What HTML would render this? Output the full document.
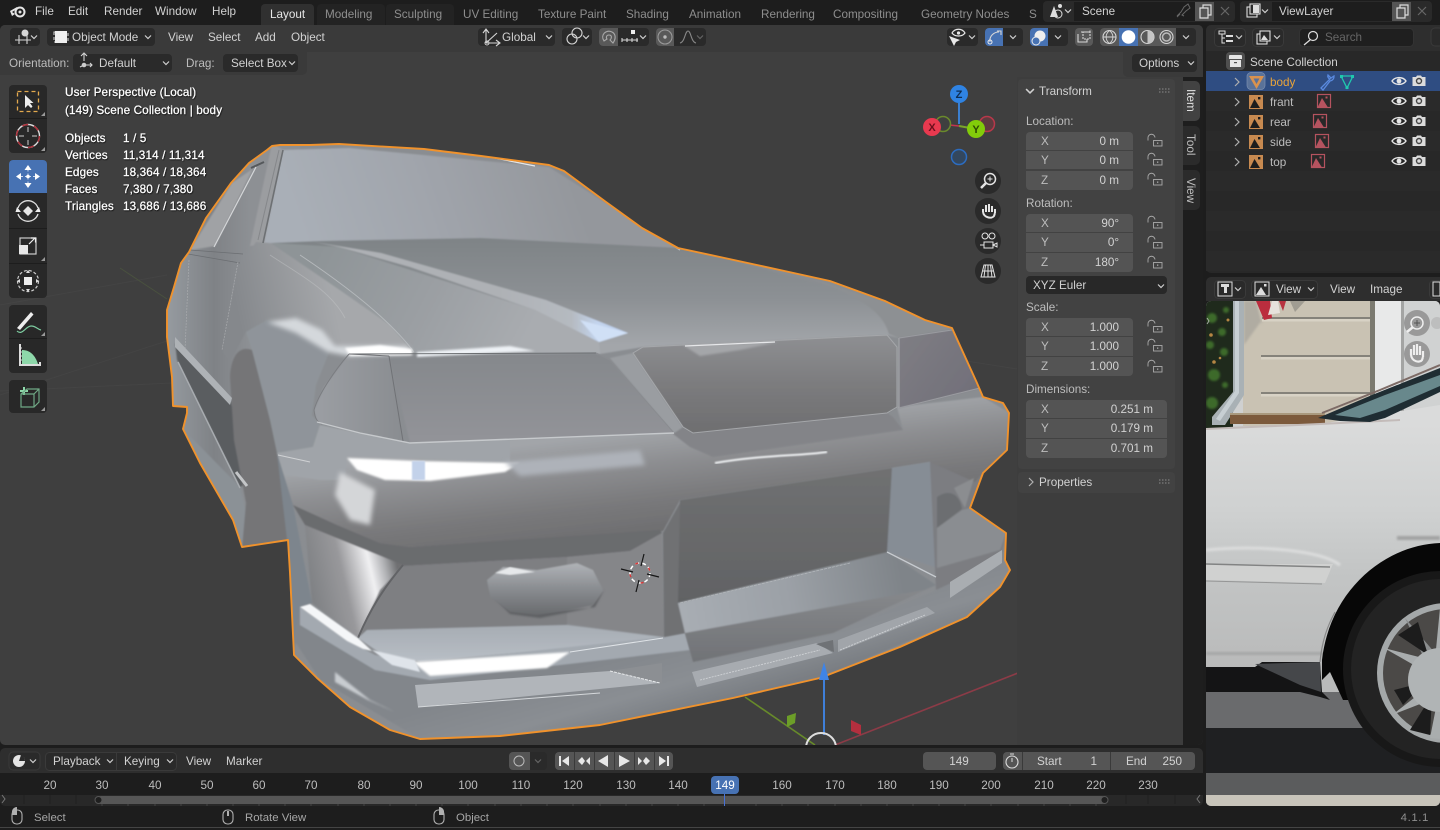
<!DOCTYPE html>
<html><head><meta charset="utf-8"><title>Blender</title>
<style>
html,body{margin:0;padding:0;background:#1d1d1d;width:1440px;height:830px;overflow:hidden}
svg{display:block;position:absolute;left:0;top:0}
text{font-family:"Liberation Sans",sans-serif;font-size:11.7px;fill:#d2d2d2}
.d{fill:#8e8e8e}.w{fill:#fff;font-size:11.7px;letter-spacing:.14px;stroke:#fff;stroke-width:.18px;filter:url(#ts)}
.s{fill:#a6a6a6;font-size:11.4px}.l{fill:#bdbdbd}.r{text-anchor:end}.m{text-anchor:middle}
</style></head><body>
<svg width="1440" height="830" viewBox="0 0 1440 830" xmlns="http://www.w3.org/2000/svg">
<defs>
<filter id="ts" x="-5%" y="-30%" width="110%" height="160%"><feDropShadow dx="0.6" dy="0.8" stdDeviation="0.5" flood-color="#000" flood-opacity=".9"/></filter>
<filter id="b06" x="-5%" y="-5%" width="110%" height="110%"><feGaussianBlur stdDeviation=".7"/></filter>
<filter id="b1" x="-20%" y="-40%" width="140%" height="180%"><feGaussianBlur stdDeviation="1"/></filter>
<filter id="b2" x="-30%" y="-60%" width="160%" height="220%"><feGaussianBlur stdDeviation="2.5"/></filter>
<filter id="b5" x="-40%" y="-40%" width="180%" height="180%"><feGaussianBlur stdDeviation="6"/></filter>
<clipPath id="car"><path id="carp" d="M272 146 280 145 310 145 339 144 424 149 481 156 549 165 564 171 606 202 642 228 678 248 720 257 780 270 830 281 885 301 925 320 952 328 977 383 983 397 1003 403 1009 413 1007 450 983 473 970 508 1006 533 1005 560 1010 570 1000 587 967 617 900 647 820 678 733 698 600 725 500 736 420 739 390 730 350 707 317 678 294 655 290 573 288 540 242 547 233 520 200 463 183 429 187 413 187 407 173 406 172 377 167 337 167 310 174 287 181 263 189 252 206 218 231 183 249 163 267 150Z"/></clipPath>
<clipPath id="img"><rect x="1206" y="301" width="234" height="505" rx="5"/></clipPath>
<clipPath id="vp"><rect x="0" y="25" width="1203" height="720" rx="5"/></clipPath>
<g id="chev"><path d="M-3-1.5 0 1.5 3-1.5" fill="none" stroke="#d0d0d0" stroke-width="1.2"/></g>
<g id="chr"><path d="M-2-4 2 0-2 4" fill="none" stroke="#b0b0b0" stroke-width="1.2"/></g>
<g id="eye"><path d="M-7 0C-4-4.500 4-4.500 7 0 4 4.500-4 4.500-7 0Z" fill="none" stroke="#e6e6e6" stroke-width="1.400"/><circle r="2.400" fill="#e6e6e6"/></g>
<g id="cam"><path d="M-6.500-4H-3L-2-5.500H2L3-4H6.500V5H-6.500Z" fill="#dcdcdc"/><circle r="3.200" fill="#444"/><circle r="1.800" fill="#dcdcdc"/></g>
<g id="lock"><path d="M-7-.5V-3A3.500 3.500 0 0 1 0-3.500" fill="none" stroke="#aaa" stroke-width=".9"/><rect x="-1.500" y="-.5" width="8.500" height="5.500" fill="none" stroke="#aaa" stroke-width=".9"/><rect x="2" y="1.500" width="1.300" height="1.300" fill="#aaa"/></g>
<g id="im"><rect x="-7" y="-7" width="14" height="14" fill="#c88a50"/><path d="M-6 6-1.500-3 4 6Z" fill="#1d1d1d"/><rect x="2" y="-5" width="2.400" height="2.400" fill="#1d1d1d"/></g>
<g id="imr"><rect x="-6.500" y="-6.500" width="13" height="13" fill="none" stroke="#b5535f" stroke-width="1.200"/><path d="M-6.500 6.500-2-3 4 6.500Z" fill="#b5535f"/><rect x="1.500" y="-4.500" width="2" height="2" fill="#b5535f"/></g>
<g id="mouse"><rect x="-5" y="-7" width="10" height="14" rx="4.500" fill="none" stroke="#b0b0b0" stroke-width="1.100"/></g>
<linearGradient id="gWind" gradientUnits="userSpaceOnUse" x1="300" y1="240" x2="560" y2="150"><stop offset="0" stop-color="#a9afb7"/><stop offset=".5" stop-color="#a0a4ab"/><stop offset="1" stop-color="#94979c"/></linearGradient>
<linearGradient id="gHood" gradientUnits="userSpaceOnUse" x1="0" y1="242" x2="0" y2="345"><stop offset="0" stop-color="#7f8487"/><stop offset=".55" stop-color="#8c9094"/><stop offset="1" stop-color="#a3a6aa"/></linearGradient>
<linearGradient id="gUnder" gradientUnits="userSpaceOnUse" x1="320" y1="250" x2="520" y2="354"><stop offset="0" stop-color="#8e9497"/><stop offset=".5" stop-color="#9a9ea2"/><stop offset="1" stop-color="#a9acb0"/></linearGradient>
<linearGradient id="gGrille" gradientUnits="userSpaceOnUse" x1="0" y1="355" x2="0" y2="440"><stop offset="0" stop-color="#85888c"/><stop offset="1" stop-color="#929398"/></linearGradient>
<linearGradient id="gLamp" gradientUnits="userSpaceOnUse" x1="320" y1="0" x2="400" y2="0"><stop offset="0" stop-color="#9a9da2"/><stop offset="1" stop-color="#8a8d91"/></linearGradient>
<linearGradient id="gGrilleR" gradientUnits="userSpaceOnUse" x1="0" y1="340" x2="0" y2="432"><stop offset="0" stop-color="#8c8d90"/><stop offset=".5" stop-color="#7b7b7d"/><stop offset="1" stop-color="#6e6e70"/></linearGradient>
<linearGradient id="gLampR" gradientUnits="userSpaceOnUse" x1="900" y1="340" x2="980" y2="400"><stop offset="0" stop-color="#7e7d83"/><stop offset="1" stop-color="#706e78"/></linearGradient>
<linearGradient id="gBumpU" gradientUnits="userSpaceOnUse" x1="600" y1="436" x2="612" y2="542"><stop offset="0" stop-color="#a2a5a9"/><stop offset=".3" stop-color="#8d8e91"/><stop offset=".65" stop-color="#79797b"/><stop offset="1" stop-color="#6c6c6e"/></linearGradient>
<linearGradient id="gPlate" gradientUnits="userSpaceOnUse" x1="0" y1="470" x2="0" y2="610"><stop offset="0" stop-color="#6f7071"/><stop offset="1" stop-color="#606163"/></linearGradient>
<linearGradient id="gVent" gradientUnits="userSpaceOnUse" x1="312" y1="590" x2="398" y2="570"><stop offset="0" stop-color="#808285"/><stop offset=".38" stop-color="#98989b"/><stop offset=".7" stop-color="#f0f0f2"/><stop offset=".86" stop-color="#b0b1b4"/><stop offset="1" stop-color="#6f7072"/></linearGradient>
<linearGradient id="gLipT" gradientUnits="userSpaceOnUse" x1="680" y1="610" x2="900" y2="570"><stop offset="0" stop-color="#a8adb3"/><stop offset=".5" stop-color="#9ba0a6"/><stop offset="1" stop-color="#7f8489"/></linearGradient>
<linearGradient id="gLipF" gradientUnits="userSpaceOnUse" x1="0" y1="590" x2="0" y2="665"><stop offset="0" stop-color="#86888b"/><stop offset="1" stop-color="#6f7175"/></linearGradient>
<linearGradient id="gSide" gradientUnits="userSpaceOnUse" x1="170" y1="0" x2="250" y2="0"><stop offset="0" stop-color="#94999e"/><stop offset=".55" stop-color="#7f8286"/><stop offset="1" stop-color="#8d9094"/></linearGradient>
<linearGradient id="gFender" gradientUnits="userSpaceOnUse" x1="235" y1="300" x2="330" y2="280"><stop offset="0" stop-color="#85888c"/><stop offset="1" stop-color="#a6a8ab"/></linearGradient>
<linearGradient id="gStripe" gradientUnits="userSpaceOnUse" x1="500" y1="0" x2="630" y2="0"><stop offset="0" stop-color="#aeb1b5"/><stop offset=".55" stop-color="#b5bac0"/><stop offset=".75" stop-color="#c3d4ee"/><stop offset="1" stop-color="#bcd0ee"/></linearGradient>
<linearGradient id="gShelf" gradientUnits="userSpaceOnUse" x1="0" y1="625" x2="0" y2="665"><stop offset="0" stop-color="#a6acb3"/><stop offset="1" stop-color="#bac0c7"/></linearGradient>
<linearGradient id="gFog" gradientUnits="userSpaceOnUse" x1="0" y1="565" x2="0" y2="615"><stop offset="0" stop-color="#adb0b4"/><stop offset=".45" stop-color="#8b8e92"/><stop offset="1" stop-color="#686a6d"/></linearGradient>
<linearGradient id="gLower" gradientUnits="userSpaceOnUse" x1="600" y1="660" x2="620" y2="730"><stop offset="0" stop-color="#82868b"/><stop offset=".6" stop-color="#8a8e93"/><stop offset="1" stop-color="#7a7e83"/></linearGradient>
<linearGradient id="gBody" gradientUnits="userSpaceOnUse" x1="0" y1="424" x2="0" y2="670"><stop offset="0" stop-color="#dadbdb"/><stop offset=".35" stop-color="#cfd1d1"/><stop offset=".6" stop-color="#c3c5c5"/><stop offset="1" stop-color="#b9baba"/></linearGradient>
</defs>

<rect width="1440" height="830" fill="#1d1d1d"/>

<!-- VIEWPORT -->
<g clip-path="url(#vp)">
<rect x="0" y="25" width="1203" height="720" fill="#3f3f3f"/>
<g stroke="#484848" stroke-width="1" fill="none" opacity=".6">
<path d="M0 305 167 275M0 395 170 340M0 391 172 383M960 360 1183 395"/>
</g>
<path d="M120 268 167 299" stroke="#49513f" fill="none"/>
<path d="M835 745 1183 608" stroke="#8c3b47" stroke-width="1.600" fill="none"/>
<path d="M745 697 815 745" stroke="#678a2a" stroke-width="1.600" fill="none"/>

<!-- CAR -->
<use href="#carp" fill="#8a8d91"/>
<g clip-path="url(#car)">
<g filter="url(#b06)">
<path d="M160 140H300V300L290 560 240 560 160 430Z" fill="url(#gSide)"/>
<path d="M272 144 284 150 264 244 250 246Z" fill="#9b9da0"/>
<path d="M283 150 349 148 549 167 680 250 480 240 264 244Z" fill="url(#gWind)"/>
<path d="M263 162 254 166 215 246 190 250 232 183Z" fill="#a0a2a5"/>
<path d="M175 343 231 402 248 483 240 487 177 360Z" fill="#5a5d60"/>
<path d="M183 429 240 487 248 520 242 547 200 463Z" fill="#8b9196"/>
<path d="M230 377C231 358 238 345 252 350L273 420 290 540 242 549 246 503 234 440Z" fill="#757577"/>
<path d="M256 242 271 243 340 290 390 325 415 354 349 354 324 346 296 327 267 320 246 332 230 362 223 352 237 270Z" fill="url(#gFender)"/>
<path d="M252 350 246 332 267 320 296 327 330 350 316 385 312 415 320 425 313 447 277 453 270 420Z" fill="#8f949a"/>
<path d="M271 243 320 241 481 238 680 248 720 257 885 302 952 328 899 338 887 335 643 347 600 354 415 354 390 325 340 290Z" fill="url(#gHood)"/>
<path d="M271 243 339 247 535 310 599 342 600 354 415 354 390 325 340 290Z" fill="url(#gUnder)"/>
<path d="M314 242 381 253 546 300 628 333 599 342 535 310 410 267 339 247Z" fill="url(#gStripe)"/>
<path d="M580 320 628 333 599 342Z" fill="#d0e0f6"/>
<path d="M760 262 885 302 952 328 899 338 889 334C880 300 830 285 760 262Z" fill="#8d9093"/>
<path d="M277 453 313 447 320 425 410 443 674 433 690 447 713 457 903 430 897 407 983 397 1008 412 1007 450 983 473 975 490 937 500 930 462 892 468 680 500 663 531 410 547 380 543 337 525 293 505Z" fill="url(#gBumpU)"/>
<path d="M277 453 313 447 320 425 410 443 510 440 510 464 420 458 347 456 345 480 320 480 285 475Z" fill="#a0a4a9"/>
<path d="M349 354 389 356 403 441 360 433 317 422 314 410 324 387Z" fill="url(#gLamp)"/>
<path d="M389 356 596 353 610 360 674 433 410 443Z" fill="url(#gGrille)"/>
<path d="M610 358 633 353 683 427 693 433 674 433Z" fill="#9a9da1"/>
<path d="M673 434 683 427 693 433 887 413 893 417 903 430 713 457 690 447Z" fill="#838488"/>
<path d="M633 353 643 347 887 335 897 347 897 407 887 413 693 433 683 427Z" fill="url(#gGrilleR)"/>
<path d="M899 338 952 330 980 388 899 408Z" fill="url(#gLampR)"/>
<path d="M293 505 337 525 380 543 410 547 660 530 662 533 630 551 567 557 403 566 353 548 305 525Z" fill="#6b6c6e"/>
<path d="M277 453 293 505 312 603 300 607 294 655 287 540Z" fill="#7d858d"/>
<path d="M305 525 403 565 380 590 358 638 312 603Z" fill="url(#gVent)"/>
<path d="M403 566 567 557 567 625 367 630 358 638 380 590Z" fill="#7e7f82"/>
<path d="M567 557 630 551 662 533 664 637 567 624Z" fill="#858689"/>
<path d="M367 630 567 625 663 637 620 643 420 662 380 653 358 638Z" fill="url(#gShelf)"/>
<path d="M294 640 300 607 347 640 380 660 430 675 547 667 664 642 690 640 693 662 833 633 937 590 1006 533 1010 570 967 617 820 678 733 698 600 725 420 739 320 680Z" fill="url(#gLower)"/>
<path d="M300 607 347 640 375 655 420 663 663 637 685 633 690 650 430 680 375 670 300 625Z" fill="#a3a9b0"/>
</g>
<path d="M283 150 263 243" stroke="#6d7073" stroke-width="1.600"/>
<path d="M279 150 258 240" stroke="#85878a" stroke-width="1"/>
<path d="M264 162 251 168" stroke="#55585b" stroke-width="2"/>
<path d="M256 167 214 247" stroke="#d4d6d8" stroke-width="1.200"/>
<path d="M480 155 535 166" stroke="#e6e8ea" stroke-width="1.200"/>
<path d="M564 171 680 250" stroke="#b7bcc2" stroke-width="1.500"/>
<path d="M190 250 243 254M188 254 240 263" stroke="#6b6e72" stroke-width=".8" fill="none"/>
<path d="M189 260 185 350M238 262 222 350" stroke="#a8aaad" stroke-width=".7" stroke-dasharray="2 1" fill="none"/>
<path d="M175 337 232 398 230 405 175 347Z" fill="#aeb2b6"/>
<path d="M178 362 240 488" stroke="#a7abaf" stroke-width="1.500"/>
<path d="M236 472 247 486" stroke="#c4c6c8" stroke-width="3"/>
<path d="M300 255C345 285 390 320 414 352" stroke="#b4b8bb" stroke-width="1" fill="none"/>
<path d="M270 255C300 275 330 290 345 318" stroke="#bfc1c3" stroke-width="1" fill="none" opacity=".5"/>
<!-- fender highlight (softened) -->
<path d="M267 322 296 318 322 330 335 346 407 346 412 354 349 356 328 352 296 333Z" fill="#d4d8dc" filter="url(#b2)"/>
<path d="M345 348 380 345 412 349 412 355 350 356Z" fill="#fff" filter="url(#b1)"/>
<path d="M417 352 510 346 535 351 417 357Z" fill="#eef2f6" filter="url(#b1)"/>
<path d="M349 354 596 353" stroke="#6b6e71" stroke-width="1"/>
<path d="M596 353 610 360 674 433" stroke="#8a8c90" stroke-width="1" fill="none"/>
<path d="M349 354 389 356M389 356 403 441" stroke="#707276" stroke-width="1" fill="none"/>
<path d="M349 354C335 370 318 395 314 410 315 420 318 422 322 424" stroke="#7b7d81" stroke-width="1" fill="none"/>
<path d="M317 422 360 433 410 443 674 433" stroke="#c6c9cc" stroke-width="1.400" fill="none"/>
<path d="M633 353 643 347 887 335 897 347 897 407 887 413 693 433 683 427Z" stroke="#a5a7aa" stroke-width="1" fill="none"/>
<path d="M683 345 778 342 740 350 700 356Z" fill="#a4a6a9" filter="url(#b1)"/>
<path d="M685 346 775 342" stroke="#e6e7e9" stroke-width="1.300"/>
<path d="M899 338V408" stroke="#a9abae" stroke-width="1"/>
<path d="M899 338 952 330M899 408 980 388" stroke="#9a9ba0" stroke-width="1" fill="none"/>
<path d="M715 463C760 455 800 456 827 452" stroke="#eef0f2" stroke-width="2" fill="none" filter="url(#b06)"/>
<path d="M347 458 420 461 520 463 505 472 430 481 385 480 357 470Z" fill="#fff" filter="url(#b1)"/>
<rect x="412" y="461" width="13" height="19" fill="#c3d2ea" filter="url(#b06)"/>
<path d="M505 462 640 450 645 465 520 476Z" fill="#aeb2b9" filter="url(#b2)"/>
<path d="M340 472 375 490 370 525 350 520 335 495Z" fill="#d4d6d8" filter="url(#b2)"/>
<path d="M278 455 310 462" stroke="#d0d2d4" stroke-width="1" fill="none"/>
<path d="M403 565C382 590 370 610 358 638" stroke="#626366" stroke-width="2" fill="none"/>
<path d="M300 607 310 604 358 638 372 651 363 649 347 641Z" fill="#f4f6f8" filter="url(#b06)"/>
<path d="M413 662 570 652 547 668 430 676Z" fill="#fff" filter="url(#b1)"/>
<path d="M570 652 663 638" stroke="#dfe3e7" stroke-width="1" fill="none"/>
<path d="M372 650 415 660 420 672 392 665Z" fill="#dfe4ea" filter="url(#b06)"/>
<path d="M489 592 510 614 540 618 595 607 604 590 590 608 540 612 510 608Z" fill="#5f6063" filter="url(#b1)"/>
<path d="M487 580 503 567 537 570 577 563 593 570 603 590 593 605 570 610 537 615 510 612 490 597Z" fill="url(#gFog)" filter="url(#b06)"/>
<path d="M495 573 510 567 535 572 510 575Z" fill="#e6e8ea" filter="url(#b06)"/>
<path d="M610 671 662 663 662 683Z" fill="#8c8f93"/>
<path d="M415 685 610 671 660 683 418 707Z" fill="#b1b5ba"/>
<path d="M610 671 660 683" stroke="#e8eaec" stroke-width="1" stroke-dasharray="3 1"/>
<path d="M418 707 600 693" stroke="#d5d8db" stroke-width="1"/>
<path d="M335 672 370 700 395 712 368 700 335 682Z" fill="#c8ccd0" filter="url(#b1)"/>
<g filter="url(#b06)">
<path d="M663 533 680 503 680 603 685 633 664 637Z" fill="#707173"/>
<path d="M680 500 892 468 888 552 800 580 678 603Z" fill="url(#gPlate)"/>
<path d="M892 468 930 462 935 567 887 552Z" fill="#868d95"/>
<path d="M930 462 975 482 983 473 970 508 1006 533 1000 560 936 590Z" fill="#7c7d81"/>
<path d="M937 497C950 488 960 495 962 509L937 528Z" fill="#6c6e71"/>
<path d="M954 488 974 478 965 508Z" fill="#8b8d90"/>
<path d="M937 528 962 510 970 508 1006 533 1000 550 937 568Z" fill="#8a8d91"/>
<path d="M678 603 888 552 936 585 833 633 693 662 685 633Z" fill="url(#gLipF)"/>
<path d="M678 603 888 552 936 585 924 590 685 633Z" fill="url(#gLipT)"/>
</g>
<path d="M887 552 936 577" stroke="#c7cbd0" stroke-width="1.300"/>
<path d="M680 603 850 563" stroke="#b3b7bb" stroke-width=".8" stroke-dasharray="3 1"/>
<path d="M692 672 817 643 833 653 697 687Z" fill="#a7abb0"/>
<path d="M838 640 927 607 935 613 838 652Z" fill="#a1a5aa"/>
<path d="M950 582 1002 550 1002 563 950 598Z" fill="#a9adb1"/>
<path d="M816 644 833 640 834 652Z" fill="#6f7276"/>
<path d="M700 680 820 650M840 650 925 615" stroke="#cfd2d5" stroke-width=".9" stroke-dasharray="2 1"/>
</g>
<use href="#carp" fill="none" stroke="#f0922c" stroke-width="1.900" stroke-linejoin="round"/>

<!-- 3D cursor -->
<g transform="translate(640 573)" fill="none">
<circle r="10" stroke="#fff" stroke-width="1.500" stroke-dasharray="4 3"/><circle r="10" stroke="#d83a3a" stroke-width="1.500" stroke-dasharray="3 12" stroke-dashoffset="3"/>
<path d="M-19-4-7-1M19 4 7 1M4-19 1-7M-4 19-1 7" stroke="#161616" stroke-width="1.200"/></g>

<!-- transform gizmo -->
<path d="M824 735V670" stroke="#3f7fd8" stroke-width="2"/><path d="M819 680 824 662 829 680Z" fill="#3f84e6"/>
<path d="M787 716 796 713 795 723 787 727Z" fill="#6c9e28"/><path d="M851 720 861 725 861 735 851 731Z" fill="#b32f3e"/>
<circle cx="821" cy="748" r="15" fill="none" stroke="#dedede" stroke-width="2"/>

<!-- header regions -->
<rect x="0" y="25" width="1203" height="27" fill="#3a3a3a"/>
<path d="M0 52H307V70a5 5 0 0 1-5 5H0Z" fill="#3a3a3a"/>
<path d="M1123 52H1203V77H1128a5 5 0 0 1-5-5Z" fill="#3a3a3a"/>

<!-- sidebar -->
<rect x="1017" y="77" width="166" height="668" fill="#3d3d3d"/>
<rect x="1018" y="79" width="157" height="390" rx="4" fill="#424242"/>
<rect x="1018" y="472" width="157" height="21" rx="4" fill="#424242"/>
<rect x="1183" y="77" width="20" height="668" fill="#1e1e1e"/>
<path d="M1183 81h12a5 5 0 0 1 5 5v30a5 5 0 0 1-5 5h-12Z" fill="#424242"/>
<path d="M1183 126h12a5 5 0 0 1 5 5v29a5 5 0 0 1-5 5h-12Z" fill="#2b2b2b"/>
<path d="M1183 170h12a5 5 0 0 1 5 5v30a5 5 0 0 1-5 5h-12Z" fill="#2b2b2b"/>
<text transform="translate(1187 89) rotate(90)" style="fill:#e0e0e0">Item</text>
<text transform="translate(1187 134) rotate(90)" class="l">Tool</text>
<text transform="translate(1187 178) rotate(90)" class="l">View</text>

<use href="#chev" transform="translate(1030 91) scale(1.300)"/><text x="1039" y="95">Transform</text>
<use href="#chr" transform="translate(1031 482)"/><text x="1039" y="486">Properties</text>
<path d="M1159 89h12M1159 92h12" stroke="#8a8a8a" stroke-width="1" stroke-dasharray="1.500 1.500"/>
<path d="M1159 480h12M1159 483h12" stroke="#8a8a8a" stroke-width="1" stroke-dasharray="1.500 1.500"/>

<text x="1026" y="125" class="l">Location:</text>
<text x="1026" y="207" class="l">Rotation:</text>
<text x="1026" y="311" class="l">Scale:</text>
<text x="1026" y="393" class="l">Dimensions:</text>
<g fill="#545454">
<path d="M1026 136a4 4 0 0 1 4-4h99a4 4 0 0 1 4 4v14h-107Z"/><rect x="1026" y="151" width="107" height="18"/><path d="M1026 171h107v15a4 4 0 0 1-4 4h-99a4 4 0 0 1-4-4Z"/>
<path d="M1026 218a4 4 0 0 1 4-4h99a4 4 0 0 1 4 4v14h-107Z"/><rect x="1026" y="233" width="107" height="19"/><path d="M1026 253h107v15a4 4 0 0 1-4 4h-99a4 4 0 0 1-4-4Z"/>
<path d="M1026 322a4 4 0 0 1 4-4h99a4 4 0 0 1 4 4v14h-107Z"/><rect x="1026" y="337" width="107" height="19"/><path d="M1026 357h107v15a4 4 0 0 1-4 4h-99a4 4 0 0 1-4-4Z"/>
<path d="M1026 404a4 4 0 0 1 4-4h133a4 4 0 0 1 4 4v14h-141Z"/><rect x="1026" y="419" width="141" height="19"/><path d="M1026 439h141v15a4 4 0 0 1-4 4h-133a4 4 0 0 1-4-4Z"/>
</g>
<rect x="1026" y="276" width="141" height="18" rx="4" fill="#282828"/>
<text x="1033" y="289">XYZ Euler</text><use href="#chev" x="1161" y="286"/>
<g>
<text x="1041" y="145" class="l">X</text><text x="1041" y="164" class="l">Y</text><text x="1041" y="184" class="l">Z</text>
<text x="1041" y="227" class="l">X</text><text x="1041" y="246" class="l">Y</text><text x="1041" y="266" class="l">Z</text>
<text x="1041" y="331" class="l">X</text><text x="1041" y="350" class="l">Y</text><text x="1041" y="370" class="l">Z</text>
<text x="1041" y="413" class="l">X</text><text x="1041" y="432" class="l">Y</text><text x="1041" y="452" class="l">Z</text>
</g>
<g text-anchor="end">
<text x="1119" y="145">0 m</text><text x="1119" y="164">0 m</text><text x="1119" y="184">0 m</text>
<text x="1119" y="227">90°</text><text x="1119" y="246">0°</text><text x="1119" y="266">180°</text>
<text x="1119" y="331">1.000</text><text x="1119" y="350">1.000</text><text x="1119" y="370">1.000</text>
<text x="1153" y="413">0.251 m</text><text x="1153" y="432">0.179 m</text><text x="1153" y="452">0.701 m</text>
</g>
<use href="#lock" x="1155" y="141"/><use href="#lock" x="1155" y="160"/><use href="#lock" x="1155" y="180"/>
<use href="#lock" x="1155" y="223"/><use href="#lock" x="1155" y="243"/><use href="#lock" x="1155" y="263"/>
<use href="#lock" x="1155" y="327"/><use href="#lock" x="1155" y="346"/><use href="#lock" x="1155" y="367"/>

<!-- nav gizmo -->
<path d="M959 103V124" stroke="#3b7fd0" stroke-width="2"/>
<path d="M940 124 959 126 975 129" stroke="#c5344e" stroke-width="1.500" fill="none"/>
<path d="M959 126 970 128" stroke="#7aa52a" stroke-width="2"/>
<circle cx="943" cy="124" r="7.500" fill="#3f3f3f" stroke="#6a8a2c" stroke-width="1.500"/>
<circle cx="987" cy="124" r="7.500" fill="#5e3b3f" stroke="#b8384a" stroke-width="1.500"/>
<circle cx="959" cy="157" r="7.500" fill="#33475e" stroke="#2c6cc0" stroke-width="1.500"/>
<circle cx="932" cy="127" r="9" fill="#e8394f"/><text x="932" y="131" class="m" style="fill:#6b0f1c;font-weight:bold;font-size:11px">X</text>
<circle cx="959" cy="94" r="9" fill="#2f83e3"/><text x="959" y="98" class="m" style="fill:#0e2e55;font-weight:bold;font-size:11px">Z</text>
<circle cx="976" cy="129" r="9" fill="#82cc0a"/><text x="976" y="133" class="m" style="fill:#2c4a00;font-weight:bold;font-size:11px">Y</text>
<g fill="#2a2a2a"><circle cx="988" cy="181" r="13"/><circle cx="988" cy="211" r="13"/><circle cx="988" cy="241" r="13"/><circle cx="988" cy="271" r="13"/></g>
<g fill="none" stroke="#e4e4e4" stroke-width="1.500">
<circle cx="990" cy="179" r="5.500"/><path d="M986 183 981 188" stroke-width="2.500"/><path d="M987.500 179h5M990 176.500v5" stroke-width="1"/>
<path d="M983 212V209M986 212V205M989 212V204M992 212V206M995 213V209M983 212C984 218 992 219 994 216L995 213" stroke-width="2"/>
<circle cx="985" cy="236" r="3" stroke-width="1"/><circle cx="992" cy="236" r="3" stroke-width="1"/><rect x="984" y="242" width="9" height="6" stroke-width="1"/><path d="M993 245 997 243V247ZM984 245H980" stroke-width="1"/>
<path d="M981 277 984 265H992L995 277ZM983 271H993M988 265V277M985.500 265 984 277M990.500 265 992 277" stroke-width="1"/>
</g>

<!-- tools -->
<rect x="9" y="85" width="38" height="68" rx="4" fill="#282828"/>
<rect x="9" y="160" width="38" height="138" rx="4" fill="#282828"/>
<rect x="9" y="305" width="38" height="68" rx="4" fill="#282828"/>
<rect x="9" y="380" width="38" height="33" rx="4" fill="#282828"/>
<path d="M9 164a4 4 0 0 1 4-4h30a4 4 0 0 1 4 4v29H9Z" fill="#4772b3"/>
<path d="M9 118.500H47M9 228.500H47M9 263.500H47M9 338.500H47" stroke="#1d1d1d"/>
<rect x="17.500" y="91.500" width="21" height="20" fill="none" stroke="#e2a94e" stroke-width="1.300" stroke-dasharray="4 3"/>
<path d="M25 95V108L28 105 31 108 32.500 106.500 30 103 33.500 103Z" fill="#eee"/>
<circle cx="28" cy="136" r="11.500" fill="none" stroke="#ddd" stroke-width="1.400"/>
<circle cx="28" cy="136" r="11.500" fill="none" stroke="#b0323c" stroke-width="1.500" stroke-dasharray="6 6"/>
<path d="M28 127V132M28 140V145M19 136H24M32 136H37" stroke="#ccc" stroke-width="1"/>
<g fill="#fff"><path d="M28 165 24.500 170H31.500ZM28 188 24.500 183H31.500ZM16 176.500 21 173V180ZM40 176.500 35 173V180Z"/><circle cx="28" cy="176.500" r="1.800"/></g>
<path d="M28 169.500v14M21 176.500h14" stroke="#fff" stroke-width=".7" stroke-dasharray="2 2"/>
<g fill="none" stroke="#ddd" stroke-width="1.300"><path d="M18 208A10.500 10.500 0 0 1 38 208M18 214A10.500 10.500 0 0 0 38 214"/></g>
<path d="M28 206 33 211 28 216 23 211Z" fill="#e6e6e6"/><path d="M17 207 21 212H15.500ZM39 207 35 212H40.500Z" fill="#eee"/>
<rect x="20" y="238" width="16" height="16" fill="none" stroke="#ccc" stroke-width="1.200"/><rect x="19" y="245" width="9" height="9" fill="#e8e8e8"/><path d="M29 244 35 238M31 238H35.500V242.500" stroke="#eee" fill="none" stroke-width="1.200"/>
<circle cx="28" cy="281" r="10.500" fill="none" stroke="#ccc" stroke-width="1.200" stroke-dasharray="3 2"/><rect x="24" y="277" width="8" height="8" fill="#eee"/>
<path d="M26 273 28 270 30 273ZM26 289 28 292 30 289ZM20 279 17 281 20 283ZM36 279 39 281 36 283Z" fill="#ddd"/>
<path d="M17 328 31 312 33.500 314.500 20 330Z" fill="#eee"/>
<path d="M17 331C22 336 26 326 31 326S37 329 41 330" fill="none" stroke="#7dcca0" stroke-width="1.200"/>
<path d="M20 344V365H40V362" fill="none" stroke="#ddd" stroke-width="2"/><path d="M22 350C32 350 36 358 38 364H22Z" fill="#8ed8aa"/><path d="M19 348h3M19 352h3M19 356h3M19 360h3M24 366v-2M28 366v-2M32 366v-2M36 366v-2" stroke="#ddd" fill="none"/>
<path d="M20 391h8M24 387v8" stroke="#8ed8aa" stroke-width="2"/>
<path d="M21 394V407H34L39 402V389H27L21 394ZM21 394H34V407M34 394 39 389" fill="none" stroke="#6fa885" stroke-width="1.200"/>
<g fill="#9a9a9a"><path d="M45 116 41 116 45 112ZM45 151 41 151 45 147" /><path d="M45 261 41 261 45 257ZM45 336 41 336 45 332ZM45 411 41 411 45 407"/></g>

<!-- header widgets -->
<g fill="#2a2a2a">
<rect x="10" y="28" width="30" height="18" rx="4"/><rect x="47" y="28" width="108" height="18" rx="4"/>
<rect x="478" y="28" width="77" height="18" rx="4"/><rect x="562" y="28" width="30" height="18" rx="4"/>
<rect x="599" y="28" width="50" height="18" rx="4"/><rect x="656" y="28" width="50" height="18" rx="4"/>
<rect x="947" y="28" width="31" height="18" rx="4"/><rect x="985" y="28" width="38" height="18" rx="4"/>
<rect x="1030" y="28" width="38" height="18" rx="4"/><rect x="1100" y="28" width="96" height="18" rx="4"/>
<rect x="73" y="54" width="99" height="18" rx="4"/><rect x="223" y="54" width="75" height="18" rx="4"/><rect x="1132" y="54" width="65" height="18" rx="4"/>
</g>
<path d="M599 32a4 4 0 0 1 4-4h15v18h-15a4 4 0 0 1-4-4Z" fill="#595959"/>
<path d="M656 32a4 4 0 0 1 4-4h14v18h-14a4 4 0 0 1-4-4Z" fill="#595959"/>
<path d="M985 32a4 4 0 0 1 4-4h14v18h-14a4 4 0 0 1-4-4Z" fill="#4772b3"/>
<path d="M1030 32a4 4 0 0 1 4-4h14v18h-14a4 4 0 0 1-4-4Z" fill="#4772b3"/>
<rect x="1075" y="28" width="18" height="18" rx="4" fill="#595959"/>
<rect x="1119" y="28" width="19" height="18" fill="#4772b3"/>
<rect x="1138" y="28" width="19" height="18" fill="#595959"/><path d="M1100 32a4 4 0 0 1 4-4h15v18h-15a4 4 0 0 1-4-4Z" fill="#595959"/><rect x="1157" y="28" width="19" height="18" fill="#595959"/>
<g fill="none" stroke="#d6d6d6" stroke-width="1.100">
<path d="M15 40H31M19 35V44M27 35V44"/>
<path d="M486 43 V30M486 43H499M486 43 497 33M483 33 486 29 489 33M496 40 500 43 496 46"/>
<circle cx="572" cy="39" r="5"/><circle cx="577" cy="33" r="5"/>
<path d="M604 41C600 35 606 29 612 32 616 34 616 39 613 43L610 40C612 38 612 35 609 35 606 35 606 38 607 39Z" stroke="#aaa"/>
<path d="M622 38V42M627 38V42M632 38V42M637 38V42M622 40H638"/>
<circle cx="665" cy="37" r="7" stroke="#999"/>
<path d="M680 43C685 42 685 31 688 31 691 31 691 42 696 43" stroke="#888"/>
<circle cx="1109.500" cy="37" r="6.500"/><path d="M1103 37H1116M1109.500 30.500C1105 34 1105 40 1109.500 43.500 1114 40 1114 34 1109.500 30.500" stroke-width=".9"/>
<rect x="1083" y="32" width="7" height="7" stroke-dasharray="2 1"/><path d="M1081 32H1090V30.500M1078 34V42H1087V39" />
<circle cx="1147.500" cy="37" r="6.500"/><circle cx="1166.500" cy="37" r="6.500"/>
<path d="M54 32H68V42H54Z" stroke="#ccc" stroke-dasharray="3 2"/>
<path d="M84 61v-7M81 56 84 53 87 56M84 65h8M90 63 92 65 90 67M80 67 84 65" />
<path d="M990 42C989 36 994 32 999 32M997 31 1001 31 1001 35"/>
</g>
<circle cx="25" cy="33" r="3.500" fill="#d6d6d6"/>
<rect x="55" y="31" width="12" height="12" fill="#eee"/>
<circle cx="84" cy="65" r="2.300" fill="#ccc"/>
<circle cx="487" cy="43" r="2" fill="none" stroke="#ccc"/>
<rect x="631" y="30" width="4" height="4" fill="#eee"/><circle cx="665" cy="37" r="1.700" fill="#bbb"/>
<circle cx="1128.500" cy="37" r="6.800" fill="#fff"/>
<path d="M1147.500 30.500A6.500 6.500 0 0 1 1147.500 43.500Z" fill="#c5c5c5"/>
<circle cx="1166.500" cy="37" r="4" fill="none" stroke="#bbb" stroke-width="1.500"/>
<path d="M949 36 960 40 956 42 954 46Z" fill="#e8e8e8"/><path d="M952 33C955 28 962 28 965 33 962 37 955 37 952 33Z" fill="none" stroke="#e8e8e8" stroke-width="1.200"/><circle cx="958.500" cy="33" r="1.600" fill="#e8e8e8"/>
<circle cx="990" cy="42" r="2" fill="none" stroke="#eee"/>
<circle cx="1040" cy="36" r="5.500" fill="#eee"/><circle cx="1036" cy="41" r="4" fill="#4772b3" stroke="#eee"/>
<use href="#chev" x="34" y="37"/><use href="#chev" x="148" y="37"/><use href="#chev" x="549" y="37"/><use href="#chev" x="586" y="37"/><use href="#chev" x="643" y="37"/><use href="#chev" x="700" y="37" opacity=".35"/>
<use href="#chev" x="972" y="37"/><use href="#chev" x="1013" y="37"/><use href="#chev" x="1058" y="37"/><use href="#chev" x="1186" y="37"/>
<use href="#chev" x="166" y="63"/><use href="#chev" x="292" y="63"/><use href="#chev" x="1191" y="63"/>
<text x="72" y="41">Object Mode</text><text x="168" y="41">View</text><text x="208" y="41">Select</text><text x="255" y="41">Add</text><text x="291" y="41">Object</text>
<text x="502" y="41">Global</text>
<text x="9" y="67" class="l">Orientation:</text><text x="99" y="67">Default</text><text x="186" y="67" class="l">Drag:</text><text x="231" y="67">Select Box</text><text x="1139" y="67">Options</text>

<!-- overlay text -->
<text x="65" y="96" class="w">User Perspective (Local)</text>
<text x="65" y="114" class="w">(149) Scene Collection | body</text>
<text x="65" y="142" class="w">Objects</text><text x="123" y="142" class="w">1 / 5</text>
<text x="65" y="159" class="w">Vertices</text><text x="123" y="159" class="w">11,314 / 11,314</text>
<text x="65" y="176" class="w">Edges</text><text x="123" y="176" class="w">18,364 / 18,364</text>
<text x="65" y="193" class="w">Faces</text><text x="123" y="193" class="w">7,380 / 7,380</text>
<text x="65" y="210" class="w">Triangles</text><text x="123" y="210" class="w">13,686 / 13,686</text>
</g>

<!-- TOP BAR -->
<rect x="0" y="0" width="1440" height="25" fill="#1d1d1d"/>
<g fill="#e6e6e6"><circle cx="20" cy="12" r="4.500" fill="none" stroke="#e6e6e6" stroke-width="2"/><circle cx="20" cy="12" r="1.500"/><path d="M10 11 17 7V9L12 12 15 14 12 16Z"/></g>
<text x="35" y="15">File</text><text x="68" y="15">Edit</text><text x="104" y="15">Render</text><text x="155" y="15">Window</text><text x="212" y="15">Help</text>
<path d="M261 8a4 4 0 0 1 4-4h45a4 4 0 0 1 4 4v17h-53Z" fill="#303030"/>
<g fill="#232323"><path d="M317 8a4 4 0 0 1 4-4h60a4 4 0 0 1 4 4v17h-68Z"/><path d="M386 8a4 4 0 0 1 4-4h60a4 4 0 0 1 4 4v17h-68Z"/></g>
<text x="270" y="18" style="fill:#e6e6e6">Layout</text>
<text x="325" y="18" class="d">Modeling</text><text x="394" y="18" class="d">Sculpting</text><text x="463" y="18" class="d">UV Editing</text><text x="538" y="18" class="d">Texture Paint</text><text x="626" y="18" class="d">Shading</text><text x="689" y="18" class="d">Animation</text><text x="761" y="18" class="d">Rendering</text><text x="833" y="18" class="d">Compositing</text><text x="921" y="18" class="d">Geometry Nodes</text><text x="1029" y="18" class="d">S</text>
<!-- scene -->
<rect x="1043" y="1" width="192" height="21" rx="4" fill="#2a2a2a"/>
<path d="M1074 2H1195V21H1074Z" fill="#1d1d1d"/>
<rect x="1195" y="2" width="19" height="19" fill="#555"/>
<rect x="1240" y="1" width="192" height="21" rx="4" fill="#2a2a2a"/>
<path d="M1272 2H1392V21H1272Z" fill="#1d1d1d"/>
<rect x="1392" y="2" width="19" height="19" fill="#555"/>
<text x="1082" y="15">Scene</text><text x="1279" y="15">ViewLayer</text>
<path d="M1050 17 1054 6 1058 17Z" fill="#ddd"/><circle cx="1060" cy="6" r="2" fill="#ddd"/><circle cx="1058" cy="14" r="4" fill="none" stroke="#ddd"/>
<use href="#chev" x="1068" y="11"/><use href="#chev" x="1265" y="11"/>
<g fill="none" stroke="#ddd" stroke-width="1.200"><path d="M1200 8V18H1208V8ZM1203 8V5H1211V15H1208"/><path d="M1397 8V18H1405V8ZM1400 8V5H1408V15H1405"/></g>
<path d="M1221 7 1229 15M1229 7 1221 15M1418 7 1426 15M1426 7 1418 15" stroke="#666" stroke-width="1.200"/>
<path d="M1177 16 1181 12 1184 7 1188 4 1190 8 1186 11 1182 15 1184 16M1177 17l3-3" fill="none" stroke="#666"/>
<g fill="none" stroke="#ddd" stroke-width="1.100"><rect x="1247" y="7" width="10" height="10" fill="#2a2a2a"/><rect x="1250" y="4" width="10" height="10" fill="#2a2a2a"/></g>
<rect x="1253" y="5" width="6" height="8" fill="#ddd"/>

<!-- OUTLINER -->
<path d="M1206 30a5 5 0 0 1 5-5h229v248h-229a5 5 0 0 1-5-5Z" fill="#282828"/>
<path d="M1206 30a5 5 0 0 1 5-5h229v26h-234Z" fill="#2e2e2e"/>
<g fill="#2a2a2a"><rect x="1206" y="91" width="234" height="20"/><rect x="1206" y="131" width="234" height="20"/><rect x="1206" y="171" width="234" height="20"/><rect x="1206" y="211" width="234" height="20"/><rect x="1206" y="251" width="234" height="20"/></g>
<rect x="1206" y="71" width="234" height="20" fill="#2f4d82"/>
<g fill="#2a2a2a" stroke="#3a3a3a"><rect x="1214.500" y="28.500" width="31" height="18" rx="4"/><rect x="1252.500" y="28.500" width="31" height="18" rx="4"/></g>
<rect x="1299.500" y="28.500" width="114" height="18" rx="4" fill="#1f1f1f" stroke="#333"/><rect x="1431" y="28" width="12" height="18" rx="4" fill="#2a2a2a" stroke="#3a3a3a"/>
<path d="M1219 31h6v3h-6ZM1222 34v9h3M1222 38h3" fill="none" stroke="#ddd"/><path d="M1226 36h7M1226 41h7" stroke="#ddd" stroke-width="2"/>
<use href="#chev" x="1239" y="37"/><use href="#chev" x="1277" y="37"/>
<g fill="none" stroke="#ddd" stroke-width="1.100"><rect x="1257" y="34" width="10" height="10" fill="#2a2a2a"/><rect x="1260" y="31" width="10" height="10" fill="#2a2a2a"/></g>
<path d="M1261 40 1264 35 1268 40Z" fill="#ddd"/>
<circle cx="1313" cy="36" r="4.500" fill="none" stroke="#ddd" stroke-width="1.200"/><path d="M1310 40 1304 45" stroke="#ddd" stroke-width="1.300"/>
<text x="1325" y="41" style="fill:#666">Search</text>
<rect x="1226" y="52" width="19" height="18" rx="4" fill="#4f4f4f"/>
<path d="M1229 56a1 1 0 0 1 1-1h11a1 1 0 0 1 1 1v3h-13Z" fill="#e4e4e4"/><path d="M1230 60h11v7h-11Z" fill="#e4e4e4"/><rect x="1234" y="62" width="3" height="1.200" fill="#4f4f4f"/>
<text x="1250" y="66">Scene Collection</text>
<use href="#chr" x="1237" y="82"/><use href="#chr" x="1237" y="102"/><use href="#chr" x="1237" y="122"/><use href="#chr" x="1237" y="142"/><use href="#chr" x="1237" y="162"/>
<rect x="1247" y="72.500" width="18" height="17" rx="4" fill="#5a7299" stroke="#7b8eb0" stroke-width=".7"/><path d="M1249 76H1264L1256.500 89ZM1253.500 78.500 1256.500 84 1259.500 78.500Z" fill="#d9924e" fill-rule="evenodd"/>
<text x="1270" y="86" style="fill:#e9a43a">body</text>
<text x="1270" y="106" class="l">frant</text><text x="1270" y="126" class="l">rear</text><text x="1270" y="146" class="l">side</text><text x="1270" y="166" class="l">top</text>
<use href="#im" x="1256" y="102"/><use href="#im" x="1256" y="122"/><use href="#im" x="1256" y="142"/><use href="#im" x="1256" y="162"/>
<use href="#imr" x="1324" y="101"/><use href="#imr" x="1320" y="121"/><use href="#imr" x="1322" y="141"/><use href="#imr" x="1318" y="161"/>
<path d="M1321 88 1330 79A3 3 0 0 1 1328 75L1331 78 1334 76A4.500 4.500 0 0 1 1330 81L1323 90Z" fill="none" stroke="#5a8adf" stroke-width="1.300"/>
<path d="M1341 76H1353L1347 88Z" fill="none" stroke="#20c8ae" stroke-width="1.300"/><g fill="#20c8ae"><rect x="1340" y="75" width="3" height="3"/><rect x="1351" y="75" width="3" height="3"/><rect x="1345.500" y="86" width="3" height="3"/></g>
<use href="#eye" x="1399" y="81"/><use href="#eye" x="1399" y="101"/><use href="#eye" x="1399" y="121"/><use href="#eye" x="1399" y="141"/><use href="#eye" x="1399" y="161"/>
<use href="#cam" x="1419" y="81"/><use href="#cam" x="1419" y="101"/><use href="#cam" x="1419" y="121"/><use href="#cam" x="1419" y="141"/><use href="#cam" x="1419" y="161"/>

<!-- IMAGE EDITOR -->
<path d="M1206 282a5 5 0 0 1 5-5h229v24h-234Z" fill="#2e2e2e"/>
<g fill="#2a2a2a" stroke="#3a3a3a"><rect x="1214.500" y="280.500" width="31" height="18" rx="4"/><rect x="1251.500" y="280.500" width="66" height="18" rx="4"/><rect x="1429.500" y="280.500" width="14" height="18" rx="4"/></g>
<rect x="1218" y="282" width="14" height="14" fill="none" stroke="#ddd"/><path d="M1221 284h8v3h-2v6h-3v-6h-3Z" fill="#ddd"/><use href="#chev" x="1238" y="289"/>
<rect x="1255" y="282" width="14" height="14" fill="none" stroke="#ddd"/><path d="M1256 295 1261 287 1266 295Z" fill="#ddd"/><rect x="1264" y="284" width="2.500" height="2.500" fill="#ddd"/>
<text x="1276" y="293">View</text><use href="#chev" x="1311" y="289"/><text x="1330" y="293">View</text><text x="1370" y="293">Image</text>
<rect x="1433" y="282" width="7" height="14" fill="none" stroke="#ddd"/>
<g clip-path="url(#img)">
<rect x="1206" y="301" width="234" height="505" fill="#cfd0d0"/>
<rect x="1243" y="301" width="130" height="125" fill="#c9c2b3"/>
<path d="M1244 301H1256L1262 325V320L1244 345Z" fill="#b0aca2" filter="url(#b1)"/>
<g fill="#85827a"><rect x="1262" y="317" width="110" height="2"/><rect x="1261" y="355" width="112" height="2"/><rect x="1261" y="392" width="112" height="2"/></g>
<g fill="#d8d2c5"><rect x="1262" y="319" width="110" height="2.500"/><rect x="1261" y="357" width="112" height="2.500"/><rect x="1261" y="394" width="112" height="2.500"/></g>
<rect x="1370" y="301" width="5" height="120" fill="#7b7a70"/>
<rect x="1375" y="301" width="26" height="120" fill="#e8e9e9"/>
<rect x="1401" y="301" width="39" height="110" fill="#d0d2d2"/>
<rect x="1401" y="301" width="3" height="110" fill="#a3a4a3"/>
<rect x="1206" y="301" width="27" height="128" fill="#1f2a1c"/>
<g fill="#3c6a2c" filter="url(#b1)"><circle cx="1212" cy="318" r="5"/><circle cx="1222" cy="332" r="4"/><circle cx="1210" cy="345" r="4"/><circle cx="1224" cy="352" r="4"/><circle cx="1214" cy="375" r="6"/><circle cx="1226" cy="310" r="3"/><circle cx="1212" cy="403" r="6"/><circle cx="1225" cy="385" r="3"/></g>
<g fill="#b58643"><circle cx="1211" cy="335" r="1.800"/><circle cx="1214" cy="362" r="1.800"/><circle cx="1228" cy="320" r="1.500"/><circle cx="1220" cy="358" r="1.300"/></g>
<path d="M1233 301H1244V395L1225 425H1212V417L1233 392Z" fill="#a9b1b5"/>
<path d="M1235 301H1239V393L1220 421 1216 419 1235 391Z" fill="#c7cfd3"/>
<path d="M1256 301 1264 320 1272 318 1270 301Z" fill="#bb2d3e"/><path d="M1272 301 1268 315 1280 313 1278 301Z" fill="#e6e2dc"/><path d="M1279 301H1286L1283 311Z" fill="#b8323f"/>
<path d="M1290 301 1295 312 1305 301Z" fill="#a09c92"/>
<rect x="1230" y="413" width="95" height="11" fill="#7c5a3c"/>
<rect x="1230" y="413" width="95" height="2" fill="#a9997e"/>
<path d="M1206 429 1320 424 1440 405V806H1206Z" fill="url(#gBody)"/>
<path d="M1206 429 1320 424 1400 420" stroke="#c3bbb9" stroke-width="2" fill="none"/>
<path d="M1318 418 1372 395 1440 368V392L1385 418 1370 422 1340 421Z" fill="#1f2d33"/>
<path d="M1335 415 1385 395 1440 375V386L1385 410 1360 418Z" fill="#68888c"/>
<path d="M1322 413 1380 390 1440 365" stroke="#7d6b66" stroke-width="2" fill="none"/>
<path d="M1206 564H1333L1325 583 1206 580Z" fill="#d0d1d0"/>
<path d="M1206 564 1330 567" stroke="#828383" stroke-width="1.500"/><path d="M1206 581 1322 584" stroke="#959696" stroke-width="1"/>
<path d="M1206 550C1260 545 1320 550 1340 565" stroke="#dcdddd" stroke-width="3" fill="none" filter="url(#b1)"/>
<rect x="1397" y="536" width="43" height="4" fill="#a2a3a3" filter="url(#b1)"/>
<rect x="1206" y="692" width="234" height="115" fill="#6a6b6d"/>
<rect x="1206" y="728" width="234" height="45" fill="#1f2022"/>
<rect x="1206" y="773" width="234" height="23" fill="#5b5c5d"/>
<rect x="1206" y="795" width="234" height="12" fill="#c8c4ba"/>
<rect x="1206" y="652" width="130" height="3" fill="#a5a6a6" filter="url(#b1)"/>
<path d="M1206 667H1255L1262 662H1320L1322 692 1330 700 1320 697 1300 692 1206 692Z" fill="#141415"/>
<path d="M1255 664 1320 662 1321 692 1300 685Z" fill="#45474a"/>
<path d="M1322 660C1330 590 1385 545 1440 543V700H1343L1330 672 1322 680Z" fill="#070707"/>
<path d="M1320 662C1322 640 1328 625 1335 612" stroke="#888" stroke-width="1.200" fill="none"/>
<circle cx="1441" cy="669" r="98" fill="#181818"/>
<circle cx="1441" cy="669" r="90" fill="#232323"/>
<circle cx="1447" cy="673" r="70" fill="#a4a8a9"/>
<circle cx="1447" cy="673" r="64" fill="#4b4947"/>
<g fill="#a9adae"><path d="M1440 608 1458 680 1434 670Z"/><path d="M1384 648 1450 665 1440 680Z"/><path d="M1392 715 1450 670 1456 690Z"/><path d="M1430 738 1443 672 1460 680 1452 740Z"/><path d="M1405 618 1448 668 1432 675Z" fill="#8a8d8e"/></g>
<g fill="#1c1c1c"><path d="M1398 635 1418 622 1428 655Z"/><path d="M1394 690 1425 682 1403 705Z"/><path d="M1410 730 1432 695 1430 735Z"/></g>
<path d="M1440 648A26 26 0 0 0 1440 712Z" fill="#b0b4b5"/>
</g>
<g fill="#8c8c8c" opacity=".8"><circle cx="1417" cy="323" r="13"/><circle cx="1417" cy="354" r="13"/></g>
<circle cx="1437" cy="323" r="6" fill="#aaa" opacity=".5"/>
<circle cx="1417" cy="323" r="6" fill="none" stroke="#eee" stroke-width="1.500"/><path d="M1414 323h6M1417 320v6" stroke="#555"/><path d="M1413 327 1407 332" stroke="#eee" stroke-width="2.500"/>
<path d="M1411 355V349M1414 355V345M1417 355V344M1420 355V346M1423 357V351M1411 355C1412 362 1420 363 1422 360L1423 357" stroke="#eee" stroke-width="2.200" fill="none"/>
<path d="M1207 318l2 3-2 3" stroke="#ddd" fill="none" opacity=".7"/>

<!-- TIMELINE -->
<path d="M0 753a5 5 0 0 1 5-5h1193a5 5 0 0 1 5 5v20H0Z" fill="#2e2e2e"/>
<rect x="0" y="773" width="1203" height="22" fill="#1d1d1d"/>
<path d="M0 795H1203V801a5 5 0 0 1-5 5H5a5 5 0 0 1-5-5Z" fill="#282828"/>
<rect x="9" y="752" width="31" height="18" rx="4" fill="#2a2a2a" stroke="#3a3a3a"/>
<circle cx="19" cy="761" r="6" fill="#e4e4e4"/><path d="M19 761 21 755A6 6 0 0 1 25 761Z" fill="#2a2a2a"/><use href="#chev" x="33" y="761"/>
<rect x="45.500" y="752.500" width="131" height="18" rx="4" fill="#2a2a2a" stroke="#3a3a3a"/><path d="M116.500 753V770" stroke="#3a3a3a"/>
<text x="53" y="765">Playback</text><use href="#chev" x="110" y="761"/><text x="124" y="765">Keying</text><use href="#chev" x="170" y="761"/>
<text x="186" y="765">View</text><text x="226" y="765">Marker</text>
<rect x="509" y="752" width="38" height="18" rx="4" fill="#2a2a2a"/><path d="M509 756a4 4 0 0 1 4-4h17v18h-17a4 4 0 0 1-4-4Z" fill="#555"/>
<circle cx="519" cy="761" r="5" fill="none" stroke="#bbb"/><use href="#chev" x="538" y="761" opacity=".35"/>
<rect x="555" y="752" width="118" height="18" rx="4" fill="#555"/>
<path d="M574.500 752V770M594.500 752V770M614.500 752V770M634.500 752V770M654.500 752V770" stroke="#3a3a3a"/>
<g fill="#e8e8e8"><rect x="559" y="756" width="2" height="10"/><path d="M569 756V766L562 761Z"/>
<path d="M578 761 582 757 585 761 582 765ZM586 761 590 757V765Z"/>
<path d="M608 755V767L598 761Z"/><path d="M619 755V767L630 761Z"/>
<path d="M638 757V765L642 761ZM643 761 646 757 650 761 646 765Z"/><path d="M659 756V766L666 761Z"/><rect x="667" y="756" width="2" height="10"/></g>
<rect x="923" y="752" width="73" height="18" rx="4" fill="#555"/>
<text x="959" y="765" class="m">149</text>
<rect x="1003" y="752" width="192" height="18" rx="4" fill="#555"/><path d="M1022.500 752V770M1110.500 752V770" stroke="#3a3a3a"/>
<circle cx="1012" cy="762" r="6" fill="none" stroke="#ddd" stroke-width="1.100"/><path d="M1012 762V758M1010 754h4" stroke="#ddd"/>
<text x="1037" y="765">Start</text><text x="1097" y="765" class="r">1</text><text x="1126" y="765">End</text><text x="1182" y="765" class="r">250</text>
<g text-anchor="middle">
<text x="50" y="789" class="l">20</text><text x="102" y="789" class="l">30</text><text x="155" y="789" class="l">40</text><text x="207" y="789" class="l">50</text><text x="259" y="789" class="l">60</text><text x="311" y="789" class="l">70</text><text x="364" y="789" class="l">80</text><text x="416" y="789" class="l">90</text><text x="468" y="789" class="l">100</text><text x="521" y="789" class="l">110</text><text x="573" y="789" class="l">120</text><text x="626" y="789" class="l">130</text><text x="678" y="789" class="l">140</text><text x="782" y="789" class="l">160</text><text x="835" y="789" class="l">170</text><text x="887" y="789" class="l">180</text><text x="939" y="789" class="l">190</text><text x="991" y="789" class="l">200</text><text x="1044" y="789" class="l">210</text><text x="1096" y="789" class="l">220</text><text x="1148" y="789" class="l">230</text>
</g>
<rect x="97" y="796" width="1009" height="8" rx="4" fill="#565656"/>
<circle cx="98.500" cy="800" r="3.500" fill="#1f1f1f" stroke="#565656"/><circle cx="1104.500" cy="800" r="3.500" fill="#1f1f1f" stroke="#565656"/>
<path d="M24 795V804M50 795V804M76 795V804M1126 795V804M1148 795V804M1175 795V804" stroke="#1f1f1f"/>
<g stroke="#454545"><path d="M102 804V806M128 804V806M155 804V806M181 804V806M207 804V806M233 804V806M259 804V806M285 804V806M311 804V806M338 804V806M364 804V806M390 804V806M416 804V806M442 804V806M468 804V806M495 804V806M521 804V806M547 804V806M573 804V806M600 804V806M626 804V806M652 804V806M678 804V806M704 804V806M756 804V806M782 804V806M808 804V806M835 804V806M861 804V806M887 804V806M913 804V806M939 804V806M965 804V806M991 804V806M1018 804V806M1044 804V806M1070 804V806M1096 804V806"/></g>
<path d="M724.500 794V806" stroke="#4772d8"/>
<rect x="711" y="776" width="28" height="18" rx="4" fill="#4772b3"/><text x="725" y="789" class="m" style="fill:#fff">149</text>
<path d="M2 795l3 4-3 4M1200 795l-3 4 3 4" fill="none" stroke="#777"/>

<!-- STATUS -->
<use href="#mouse" x="17" y="817"/><path d="M12 815V811a5 5 0 0 1 5-4V815Z" fill="#b0b0b0"/>
<use href="#mouse" x="228" y="817"/><rect x="227" y="811" width="2" height="5" fill="#b0b0b0"/>
<use href="#mouse" x="439" y="817"/><path d="M439 807a5 5 0 0 1 5 4V815H439Z" fill="#b0b0b0"/>
<text x="34" y="821" class="s">Select</text><text x="245" y="821" class="s">Rotate View</text><text x="456" y="821" class="s">Object</text>
<text x="1429" y="821" class="s r" style="letter-spacing:.6px;fill:#8f8f8f">4.1.1</text>
<rect x="0" y="827" width="1440" height="1" fill="#444"/>
</svg>
</body></html>
